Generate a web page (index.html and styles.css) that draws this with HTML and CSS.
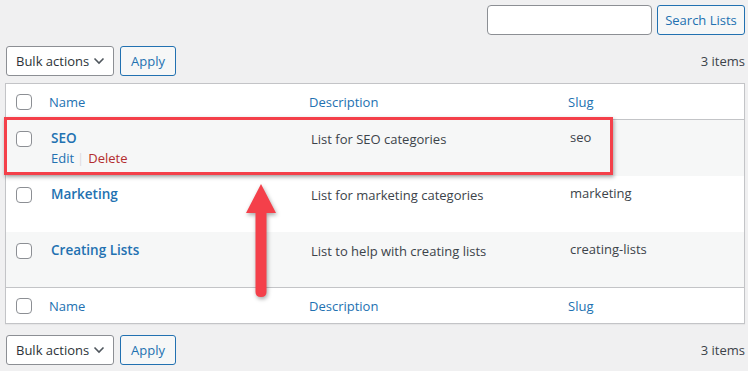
FILE: index.html
```html
<!DOCTYPE html>
<html lang="en">
<head>
    <meta charset="UTF-8">
    <title>Lists</title>
    <link rel="stylesheet" href="styles.css">
</head>
<body>
    <div class="wrap">
        <div class="search-box">
            <input type="text" class="search-input">
            <button class="button search-btn">Search Lists</button>
        </div>

        <div class="tablenav top">
            <div class="actions">
                <div class="select">Bulk actions
                    <svg class="chevron" width="12" height="8" viewBox="0 0 12 8"><path d="M1.5 1.5 L6 6 L10.5 1.5" fill="none" stroke="#50575e" stroke-width="1.6"/></svg>
                </div>
                <button class="button">Apply</button>
            </div>
            <span class="count">3 items</span>
        </div>

        <div class="table-area">
            <table class="list-table">
                <thead>
                    <tr>
                        <td class="check"><span class="cb"></span></td>
                        <th class="col-name">Name</th>
                        <th class="col-desc">Description</th>
                        <th class="col-slug">Slug</th>
                    </tr>
                </thead>
                <tbody>
                    <tr class="alt">
                        <td class="check"><span class="cb"></span></td>
                        <td class="col-name">
                            <a class="row-title">SEO</a>
                            <div class="row-actions"><a>Edit</a><span class="sep">|</span><a class="delete">Delete</a></div>
                        </td>
                        <td class="col-desc desc">List for SEO categories</td>
                        <td class="col-slug">seo</td>
                    </tr>
                    <tr>
                        <td class="check"><span class="cb"></span></td>
                        <td class="col-name"><a class="row-title">Marketing</a></td>
                        <td class="col-desc desc">List for marketing categories</td>
                        <td class="col-slug">marketing</td>
                    </tr>
                    <tr class="alt">
                        <td class="check"><span class="cb"></span></td>
                        <td class="col-name"><a class="row-title">Creating Lists</a></td>
                        <td class="col-desc desc">List to help with creating lists</td>
                        <td class="col-slug">creating-lists</td>
                    </tr>
                </tbody>
                <tfoot>
                    <tr>
                        <td class="check"><span class="cb"></span></td>
                        <th class="col-name">Name</th>
                        <th class="col-desc">Description</th>
                        <th class="col-slug">Slug</th>
                    </tr>
                </tfoot>
            </table>

            <!-- annotation overlay -->
            <div class="highlight"></div>
            <svg class="arrow" width="40" height="124" viewBox="0 0 40 124">
                <path d="M20 2 L35 31 L25.5 31 L25.5 110 Q25.5 115 20 115 Q14.5 115 14.5 110 L14.5 31 L5 31 Z" fill="#f4404a"/>
            </svg>
        </div>

        <div class="tablenav bottom">
            <div class="actions">
                <div class="select">Bulk actions
                    <svg class="chevron" width="12" height="8" viewBox="0 0 12 8"><path d="M1.5 1.5 L6 6 L10.5 1.5" fill="none" stroke="#50575e" stroke-width="1.6"/></svg>
                </div>
                <button class="button">Apply</button>
            </div>
            <span class="count">3 items</span>
        </div>
    </div>
</body>
</html>
```

FILE: styles.css
```css
body {
    margin: 0;
    background-color: #f0f0f1;
    font-family: "Open Sans", Arial, sans-serif;
    font-size: 13px;
    color: #3c434a;
}
.wrap {
    width: 740px;
    padding: 5px 3px 0 5px;
}
.search-box {
    display: flex;
    justify-content: flex-end;
    gap: 5px;
    height: 30px;
}
.search-input {
    width: 165px;
    height: 30px;
    box-sizing: border-box;
    border: 1px solid #8c8f94;
    border-radius: 4px;
    background: #fff;
    margin: 0;
}
.button {
    font-family: inherit;
    font-size: 13px;
    height: 30px;
    box-sizing: border-box;
    padding: 0 9px;
    border: 1px solid #2271b1;
    border-radius: 3px;
    background: #f6f7f7;
    color: #2271b1;
    margin: 0;
}
.search-btn {
    width: 88px;
    padding: 0;
}
.tablenav {
    display: flex;
    justify-content: space-between;
    align-items: center;
    height: 30px;
}
.tablenav.top {
    margin-top: 11px;
    margin-bottom: 7px;
}
.tablenav.bottom {
    margin-top: 11px;
    padding-left: 1px;
}
.tablenav.top .actions {
    padding-left: 1px;
}
.actions {
    display: flex;
    gap: 6px;
}
.select {
    display: flex;
    align-items: center;
    justify-content: space-between;
    width: 108px;
    height: 30px;
    box-sizing: border-box;
    padding: 0 8px 0 9px;
    border: 1px solid #8c8f94;
    border-radius: 3px;
    background: #fff;
    color: #2c3338;
}
.tablenav .button {
    width: 56px;
    padding: 0;
}
.count {
    color: #3c434a;
}
.table-area {
    position: relative;
}
.list-table {
    width: 740px;
    border-collapse: collapse;
    table-layout: fixed;
    background: #fff;
    border: 1px solid #c3c4c7;
    box-shadow: 0 1px 1px rgba(0,0,0,0.04);
}
.list-table th {
    font-weight: normal;
    text-align: left;
    color: #2271b1;
}
.list-table thead th,
.list-table tfoot th {
    height: 35px;
    padding: 0 8px;
    vertical-align: middle;
}
.list-table thead tr {
    border-bottom: 1px solid #c3c4c7;
}
.list-table tfoot tr {
    border-top: 1px solid #c3c4c7;
}
.list-table tbody td {
    height: 56px;
    padding: 8px 10px 6px;
    box-sizing: border-box;
    vertical-align: top;
}
.list-table tbody tr.alt {
    background: #f6f7f7;
}
.list-table .check {
    width: 25px;
    padding: 0 0 0 10px;
    vertical-align: middle;
}
.list-table tbody .check {
    padding: 11px 0 0 10px;
    vertical-align: top;
}
.list-table thead .col-name {
    width: 244px;
}
.list-table thead .col-desc {
    width: 243px;
}
.cb {
    display: block;
    width: 16px;
    height: 16px;
    box-sizing: border-box;
    border: 1px solid #8c8f94;
    border-radius: 4px;
    background: #fff;
}
.row-title {
    display: block;
    font-weight: 600;
    font-size: 13.5px;
    color: #2271b1;
    line-height: 20px;
}
.row-actions {
    font-size: 13px;
    line-height: 21px;
    color: #2271b1;
}
.row-actions .sep {
    color: #dcdcde;
    margin: 0 4px 0 3px;
}
.row-actions .delete {
    color: #b32d2e;
}
.list-table tbody .desc {
    padding-top: 10px;
}
.list-table tbody .col-slug {
    padding-top: 8px;
}
.highlight {
    position: absolute;
    left: -1px;
    top: 34px;
    width: 609px;
    height: 58px;
    box-sizing: border-box;
    border: 3px solid #f4404a;
    box-shadow: 1px 2px 4px rgba(0,0,0,0.35);
}
.arrow {
    position: absolute;
    left: 236px;
    top: 99px;
    filter: drop-shadow(1px 2px 2px rgba(0,0,0,0.35));
}
```
